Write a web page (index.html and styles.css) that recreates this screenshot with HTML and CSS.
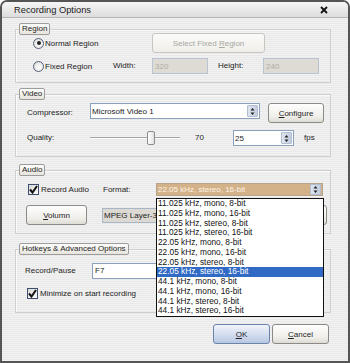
FILE: index.html
```html
<!DOCTYPE html>
<html>
<head>
<meta charset="utf-8">
<link rel="stylesheet" href="styles.css">
</head>
<body>
<div class="window">
  <div class="titlebar">
    <span class="title">Recording Options</span>
    <svg class="close" width="8" height="8" viewBox="0 0 8 8"><path d="M1 1 L7 7 M7 1 L1 7" stroke="#111" stroke-width="1.8"/></svg>
  </div>
  <div class="content">
    <section class="group g-region">
      <div class="legend">Region</div>
      <div class="box">
        <div class="row r-region1">
          <label class="radio w-119"><span class="circle checked"></span>Normal Region</label>
          <span class="btn disabled w-113"><span>Select Fixed <u>R</u>egion</span></span>
        </div>
        <div class="row r-region2">
          <label class="radio w-80"><span class="circle"></span>Fixed Region</label>
          <span class="lbl w-39">Width:</span>
          <span class="input disabled w-56">320</span>
          <span class="lbl w-45 ml-10">Height:</span>
          <span class="input disabled w-56">240</span>
        </div>
      </div>
    </section>

    <section class="group g-video">
      <div class="legend">Video</div>
      <div class="box">
        <div class="row r-video1">
          <span class="lbl w-63 mt-4">Compressor:</span>
          <span class="select w-170"><span>Microsoft Video 1</span><span class="arrows"><svg width="5" height="9" viewBox="0 0 5 9"><path d="M2.5 1 L4.5 3.5 L0.5 3.5 Z M2.5 8 L4.5 5.5 L0.5 5.5 Z" fill="#222"/></svg></span></span>
          <span class="btn w-56 ml-8 h-20"><span><u>C</u>onfigure</span></span>
        </div>
        <div class="row r-video2">
          <span class="lbl w-63">Quality:</span>
          <span class="slider"><span class="thumb"></span></span>
          <span class="lbl w-38 ml-15">70</span>
          <span class="select w-61 spin"><span>25</span><span class="arrows"><svg width="5" height="9" viewBox="0 0 5 9"><path d="M2.5 1 L4.5 3.5 L0.5 3.5 Z M2.5 8 L4.5 5.5 L0.5 5.5 Z" fill="#222"/></svg></span></span>
          <span class="lbl ml-10">fps</span>
        </div>
      </div>
    </section>

    <section class="group g-audio">
      <div class="legend">Audio</div>
      <div class="box">
        <div class="row r-audio1">
          <label class="check w-75"><span class="cbox"><svg width="9" height="9" viewBox="0 0 9 9"><path d="M1 4.5 L3.5 7.5 L8 1" fill="none" stroke="#111" stroke-width="2"/></svg></span>Record Audio</label>
          <span class="lbl w-53">Format:</span>
          <span class="select w-167 tan"><span>22.05 kHz, stereo, 16-bit</span><span class="arrows"><svg width="5" height="9" viewBox="0 0 5 9"><path d="M2.5 1 L4.5 3.5 L0.5 3.5 Z M2.5 8 L4.5 5.5 L0.5 5.5 Z" fill="#222"/></svg></span></span>
        </div>
        <div class="row r-audio2">
          <span class="btn w-61 h-20"><span><u>V</u>olumn</span></span>
          <span class="input grey w-190 ml-15">MPEG Layer-3</span>
          <span class="btn w-30 h-20 ml-5"><span>...</span></span>
        </div>
      </div>
    </section>

    <section class="group g-hotkeys">
      <div class="legend">Hotkeys &amp; Advanced Options</div>
      <div class="box">
        <div class="row r-hot1">
          <span class="lbl w-67">Record/Pause</span>
          <span class="input w-200">F7</span>
        </div>
        <div class="row r-hot2">
          <label class="check"><span class="cbox"><svg width="9" height="9" viewBox="0 0 9 9"><path d="M1 4.5 L3.5 7.5 L8 1" fill="none" stroke="#111" stroke-width="2"/></svg></span>Minimize on start recording</label>
        </div>
      </div>
    </section>

    <div class="dialog-buttons">
      <span class="btn default w-57 h-20"><span><u>O</u>K</span></span>
      <span class="btn w-57 h-20"><span><u>C</u>ancel</span></span>
    </div>
  </div>

  <ul class="dropdown">
    <li>11.025 kHz, mono, 8-bit</li>
    <li>11.025 kHz, mono, 16-bit</li>
    <li>11.025 kHz, stereo, 8-bit</li>
    <li>11.025 kHz, stereo, 16-bit</li>
    <li>22.05 kHz, mono, 8-bit</li>
    <li>22.05 kHz, mono, 16-bit</li>
    <li>22.05 kHz, stereo, 8-bit</li>
    <li class="sel">22.05 kHz, stereo, 16-bit</li>
    <li>44.1 kHz, mono, 8-bit</li>
    <li>44.1 kHz, mono, 16-bit</li>
    <li>44.1 kHz, stereo, 8-bit</li>
    <li>44.1 kHz, stereo, 16-bit</li>
  </ul>
</div>
</body>
</html>
```

FILE: styles.css
```css
* { box-sizing: border-box; }
html, body { margin: 0; padding: 0; }
body {
  width: 350px; height: 363px; overflow: hidden;
  font-family: "Liberation Sans", Arial, sans-serif;
  font-size: 8px; color: #1e1e1e; background: #ffffff;
}
u { text-decoration: underline; text-underline-offset: 1px; }

.window {
  position: relative;
  width: 350px; height: 363px;
  border: 2px solid #555555;
  border-radius: 7px 7px 0 0;
  background: repeating-linear-gradient(to bottom, #f2f2f2 0, #f2f2f2 1px, #e9e9e9 1px, #e9e9e9 2px);
  display: flex; flex-direction: column;
}
.titlebar {
  height: 16px;
  display: flex; align-items: center; justify-content: space-between;
  padding: 0 20px 0 12px;
  background: linear-gradient(#f6f6f6, #dcdcdc);
  border-bottom: 1px solid #b4b4b4;
  border-radius: 5px 5px 0 0;
  font-size: 9.3px; color: #1a1a1a;
}
.close { display: block; }

.content { padding: 5px 0 0 13px; display: flex; flex-direction: column; }

.group { width: 316px; display: flex; flex-direction: column; align-items: flex-start; }
.legend {
  position: relative; z-index: 1;
  margin-left: 4px; height: 12px; padding: 0 2px;
  line-height: 10px;
  border: 1px solid #9c9c9c; border-radius: 2px;
  background: linear-gradient(#fdfdfb, #e6e4dc);
}
.box {
  width: 100%; margin-top: -6px;
  border: 1px solid #cfcfcf;
  box-shadow: inset 1px 1px 0 #fafafa;
  display: flex; flex-direction: column;
}
.g-video { margin-top: 5px; }
.g-audio { margin-top: 7px; }
.g-hotkeys { margin-top: 9px; }

.g-region .box { padding: 3px 0 8px 17px; }
.g-video .box { padding: 8px 0 10px 11px; }
.g-audio .box { padding: 12px 0 8px 0; }
.g-hotkeys .box { padding: 13px 0 13px 0; }

.row { display: flex; align-items: center; }
.r-region1 { height: 20px; }
.r-region2 { height: 16px; margin-top: 5px; }
.r-video1 { height: 20px; align-items: flex-start; }
.r-video2 { height: 16px; margin-top: 7px; }
.r-audio1 { height: 13px; padding-left: 12px; }
.r-audio2 { height: 20px; margin-top: 9px; padding-left: 10px; }
.r-hot1 { height: 15px; padding-left: 9px; }
.r-hot2 { height: 12px; margin-top: 9px; padding-left: 11px; }

.lbl { line-height: 12px; white-space: nowrap; }
.mt-4 { margin-top: 4px; }
.ml-5 { margin-left: 5px; }
.ml-8 { margin-left: 8px; }
.ml-10 { margin-left: 10px; }
.ml-15 { margin-left: 15px; }
.w-30 { width: 30px; } .w-38 { width: 38px; } .w-39 { width: 39px; } .w-45 { width: 45px; }
.w-53 { width: 53px; } .w-56 { width: 56px; } .w-57 { width: 57px; } .w-61 { width: 61px; }
.w-63 { width: 63px; } .w-67 { width: 67px; } .w-75 { width: 75px; } .w-80 { width: 80px; }
.w-113 { width: 113px; } .w-119 { width: 119px; } .w-167 { width: 167px; } .w-170 { width: 170px; }
.w-190 { width: 190px; } .w-200 { width: 200px; }
.h-20 { height: 20px; }

.radio, .check { display: flex; align-items: center; white-space: nowrap; }
.circle {
  width: 11px; height: 11px; margin-right: 1px;
  border: 1px solid #56627a; border-radius: 50%;
  background: radial-gradient(circle at 60% 60%, #ffffff 0, #ececea 50%, #cfcfcb 100%);
  display: flex; align-items: center; justify-content: center;
}
.circle.checked::after {
  content: ""; width: 4px; height: 4px; border-radius: 50%; background: #222;
}
.cbox {
  width: 11px; height: 11px; margin-right: 2px;
  border: 1px solid #3e4e6e;
  background: linear-gradient(135deg, #d8d8d4, #fbfbfb);
  display: flex; align-items: center; justify-content: center;
}
.cbox svg { display: block; }

.btn {
  height: 20px;
  display: flex; align-items: center; justify-content: center;
  border: 1px solid #8b8a84; border-radius: 3px;
  background: linear-gradient(#fefefe, #efeee9 70%, #dcdbd4);
  white-space: nowrap;
}
.btn.disabled { color: #a8a79f; border-color: #c6c5be; background: linear-gradient(#fbfbfa, #efeeea); }
.btn.default { border-color: #6c83aa; background: linear-gradient(#f1f4fa, #cfdaee 60%, #b7c7e3); }

.input {
  height: 16px; padding-left: 2px;
  display: flex; align-items: center;
  border: 1px solid #8aa0bc; background: #ffffff;
  white-space: nowrap; overflow: hidden;
}
.input.disabled { background: #dedbd4; color: #aeaca5; border-color: #b9c4d2; }
.input.grey { height: 15px; padding-left: 1px; background: #dcd9d2; border-color: #a9b6c8; }

.select {
  height: 16px; padding-left: 1px;
  display: flex; align-items: center; justify-content: space-between;
  border: 1px solid #8aa0bc; background: #ffffff;
  white-space: nowrap;
}
.select.spin { height: 16px; }
.select.tan { height: 13px; background: #d4b289; color: #fdf3e6; border-color: #b5a48c; }
.arrows {
  width: 11px; align-self: stretch; margin: 1px;
  display: flex; align-items: center; justify-content: center;
  border: 1px solid #b2bdd0; border-radius: 1px;
  background: linear-gradient(90deg, #dfe5ef, #c3cde0);
}
.select.tan .arrows { margin: 0 1px 0 0; }
.arrows svg { display: block; }

.slider {
  width: 90px; height: 16px;
  display: flex; align-items: center;
  background: linear-gradient(to bottom, transparent 7px, #a3a3a3 7px, #a3a3a3 8px, #ffffff 8px, #ffffff 9px, transparent 9px);
}
.thumb {
  margin-left: 57px; width: 8px; height: 14px;
  border: 1px solid #8c8c8c; border-radius: 2px;
  background: linear-gradient(90deg, #ffffff, #e2e2e0);
}

.dialog-buttons {
  margin-top: 11px; padding-right: 19px;
  display: flex; justify-content: flex-end; gap: 2px;
}

.dropdown {
  position: absolute; left: 154px; top: 196px;
  width: 168px; margin: 0; padding: 0; list-style: none;
  border: 1px solid #111; background: #ffffff;
  font-size: 8.3px; color: #111;
}
.dropdown li { height: 9.75px; line-height: 9.75px; padding-left: 1px; white-space: nowrap; }
.dropdown li.sel { background: #316ac5; color: #ffffff; }
```
